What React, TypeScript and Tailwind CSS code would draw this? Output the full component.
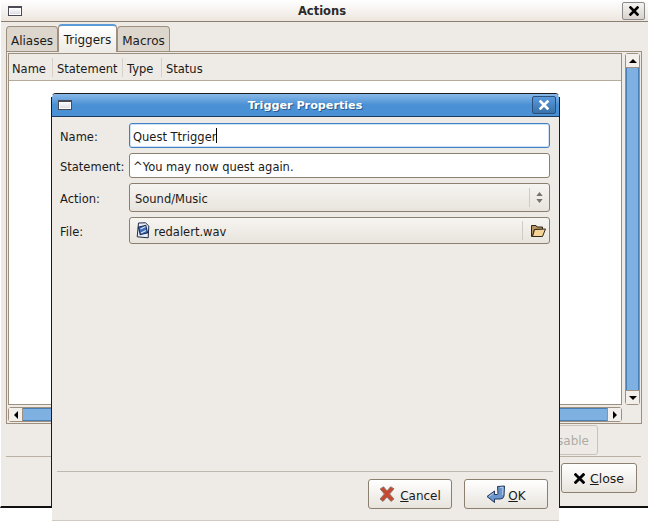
const ui = { fontFamily: '"DejaVu Sans", sans-serif' };

function WindowGlyph() {
  return (
    <div className="h-[10px] w-[14px] border border-[#4a4a55] border-t-2 bg-gradient-to-b from-white to-[#d8d8e4] shadow-[inset_0_0_0_1px_#fff]" />
  );
}

function CloseGlyph({ color = "#000", size = 10 }: { color?: string; size?: number }) {
  return (
    <svg width={size} height={size} viewBox="0 0 10 10">
      <path d="M1.5 1.5 L8.5 8.5 M8.5 1.5 L1.5 8.5" stroke={color} strokeWidth="2.6" strokeLinecap="square" />
    </svg>
  );
}

function Arrow({ dir }: { dir: "up" | "down" | "left" | "right" }) {
  const points = { up: "0,6 4,2 8,6", down: "0,2 4,6 8,2", left: "6,0 2,4 6,8", right: "2,0 6,4 2,8" }[dir];
  return (
    <svg width="8" height="8" viewBox="0 0 8 8">
      <polygon points={points} fill="#000" />
    </svg>
  );
}

function Tab({ label, width, active }: { label: string; width: number; active?: boolean }) {
  return active ? (
    <div className="z-10 flex h-[28px] items-center justify-center rounded-t-[4px] border border-b-0 border-[#9d9080] border-t-2 border-t-[#5b9bd8] bg-gradient-to-b from-white to-[#eeebe6] text-[12px] text-[#1a1a1a]" style={{ width }}>
      <span className="mt-[1px]">{label}</span>
    </div>
  ) : (
    <div className="mt-[2px] flex h-[25px] items-center justify-center rounded-t-[4px] border border-b-0 border-[#9d9080] bg-[#dcd6cd] text-[12px] text-[#1a1a1a]" style={{ width }}>
      <span className="mt-[3px]">{label}</span>
    </div>
  );
}

function HeaderCell({ label, width, pad, last }: { label: string; width: number; pad: number; last?: boolean }) {
  return (
    <div className="relative flex h-full items-center" style={{ width, paddingLeft: pad }}>
      <span className="mt-[5px]">{label}</span>
      {!last && <div className="absolute right-0 top-[4px] h-[19px] w-px bg-[#d5d0c8]" />}
    </div>
  );
}

function FormLabel({ text }: { text: string }) {
  return <div className="mt-[4px] w-[69px] shrink-0 text-[#1a1a1a]">{text}</div>;
}

function FolderIcon() {
  return (
    <svg width="16" height="14" viewBox="0 0 16 14">
      <path d="M1.5 1.5 L6 1.5 L7 3 L12.5 3 L12.5 5.5 L4.5 5.5 L2.5 12.5 L1.5 12.5 Z" fill="#b8955c" stroke="#2f2719" strokeWidth="1" strokeLinejoin="round" />
      <path d="M4.5 5.5 L15.5 5 L12.5 12.5 L2.5 12.5 Z" fill="#f4d396" stroke="#2f2719" strokeWidth="1" strokeLinejoin="round" />
    </svg>
  );
}

function AudioIcon() {
  return (
    <svg width="14" height="17" viewBox="0 0 14 17">
      <path d="M2.5 1 L9.5 0.8 L12.8 4 L12.2 15.8 L1.2 14.8 Z" fill="#e8ecf4" stroke="#1f2a48" strokeWidth="1" strokeLinejoin="round" />
      <rect x="3.2" y="4.2" width="7.6" height="7.6" fill="#3c6cb8" stroke="#16264f" strokeWidth="1" transform="rotate(-14 7 8)" />
      <path d="M4.5 7 L9.5 4.5 M5 11 L10 8.5" stroke="#dbe6f6" strokeWidth="1.1" />
    </svg>
  );
}

function OkIcon() {
  return (
    <svg width="20" height="19" viewBox="0 0 20 19">
      <path d="M11.5 1.5 L18.5 1 L18 11 Q17.5 14 14 14 L8.5 14 L8.5 17.5 L1 11.5 L8.5 6 L8.5 9.5 L11 9.5 Q12 9.5 12 8.5 Z" fill="#6a96cd" stroke="#24395c" strokeWidth="1" strokeLinejoin="round" />
      <path d="M14 2.5 L17 2.3 L16.6 10" stroke="#bcd2ec" strokeWidth="1" fill="none" />
      <path d="M3 11.5 L7.5 8.2" stroke="#bcd2ec" strokeWidth="1" fill="none" />
    </svg>
  );
}

function CancelIcon() {
  return (
    <svg width="16" height="16" viewBox="0 0 16 16">
      <path d="M1.2 3 L4.6 0.8 L8 5 L11.6 0.8 L15 2.8 L10.6 8 L15 13 L12 15.4 L8 11 L4 15.4 L1 13 L5.4 8 Z" fill="#c6482e" stroke="#8a7a72" strokeWidth="1" strokeLinejoin="round" />
    </svg>
  );
}

function DialogButton({ icon, first, rest, gap }: { icon: React.ReactNode; first: string; rest: string; gap: number }) {
  return (
    <div className="flex h-[30px] w-[84px] items-center justify-center rounded-[3px] border border-[#8b8070] bg-gradient-to-b from-white to-[#e8e4dd] text-[12px] text-[#1a1a1a]" style={{ gap }}>
      {icon}
      <span className="mt-[3px]">
        <span className="underline">{first}</span>
        {rest}
      </span>
    </div>
  );
}

export default function App() {
  return (
    <div className="relative h-[521px] w-[648px] overflow-hidden bg-white text-[11.5px] leading-none" style={ui}>
      {/* Actions window */}
      <div className="flex h-[508px] flex-col border-b-2 border-l border-[#111] border-l-white bg-[#eeebe6]">
        <div className="flex h-[22px] shrink-0 items-center border-b border-[#8a7f70] bg-gradient-to-b from-white to-[#ede6df] pl-[7px] pr-[3px]">
          <WindowGlyph />
          <div className="mt-[2px] flex-1 text-center font-bold text-[#2a2a2a]">Actions</div>
          <div className="flex h-[18px] w-[23px] items-center justify-center rounded-[2px] border border-[#8a8a8a] bg-gradient-to-b from-[#f5f3f0] to-[#d8d3cc]">
            <CloseGlyph />
          </div>
        </div>

        <div className="flex flex-1 flex-col px-[5px] pt-[2px]">
          <div className="-mb-px flex h-[28px] shrink-0 items-start">
            <Tab label="Aliases" width={52} />
            <Tab label="Triggers" width={59} active />
            <Tab label="Macros" width={53} />
          </div>

          <div className="flex h-[373px] w-[636px] shrink-0 flex-col border border-[#9d9080] p-px">
            <div className="flex min-h-0 flex-1">
              <div className="flex flex-1 flex-col border border-[#9d9080] bg-white">
                <div className="flex h-[27px] shrink-0 items-center border-b border-[#b5ab9b] bg-[#eeebe6] text-[#1a1a1a]">
                  <HeaderCell label="Name" width={44} pad={3} />
                  <HeaderCell label="Statement" width={70} pad={4} />
                  <HeaderCell label="Type" width={39} pad={4} />
                  <HeaderCell label="Status" width={60} pad={4} last />
                </div>
              </div>
              <div className="ml-[3px] flex w-[15px] shrink-0 flex-col rounded-[3px] border border-[#9d9080]">
                <div className="flex h-[14px] items-center justify-center border-b border-[#9d9080] bg-[#f3f0ec]">
                  <Arrow dir="up" />
                </div>
                <div className="flex-1 border-x border-[#4a7fb5] bg-[#7eb0e2]" />
                <div className="flex h-[14px] items-center justify-center border-t border-[#9d9080] bg-[#f3f0ec]">
                  <Arrow dir="down" />
                </div>
              </div>
            </div>
            <div className="mt-[2px] flex h-[15px] w-[614px] shrink-0 rounded-[3px] border border-[#9d9080]">
              <div className="flex w-[14px] items-center justify-center border-r border-[#9d9080] bg-[#f3f0ec]">
                <Arrow dir="left" />
              </div>
              <div className="flex-1 border-y border-[#4a7fb5] bg-[#7eb0e2]" />
              <div className="flex w-[14px] items-center justify-center border-l border-[#9d9080] bg-[#f3f0ec]">
                <Arrow dir="right" />
              </div>
            </div>
          </div>

          <div className="flex h-[31px] shrink-0 justify-end pr-[45px] pt-px">
            <div className="flex h-[30px] w-[80px] items-center justify-end rounded-[3px] border border-[#c9c3b9] pr-[8px] text-[12px] text-[#b0aca5]">
              <span className="mt-[2px]">Disable</span>
            </div>
          </div>
          <div className="mr-[2px] mt-px h-px shrink-0 bg-[#b9b1a4]" />
          <div className="flex justify-end pr-[6px] pt-[6px]">
            <div className="flex h-[30px] w-[76px] items-center justify-center gap-[5px] rounded-[3px] border border-[#8b8070] bg-gradient-to-b from-white to-[#e8e4dd] text-[12.5px] text-[#1a1a1a]">
              <CloseGlyph size={11} />
              <span className="mt-[3px]">
                <span className="underline">C</span>lose
              </span>
            </div>
          </div>
        </div>
      </div>

      {/* Trigger Properties dialog */}
      <div className="absolute left-[51px] top-[93px] flex h-[428px] w-[509px] flex-col rounded-t-[5px] border-x border-t border-transparent border-t-[#1a1a1a] bg-[#eeebe6] bg-clip-padding">
        <div className="absolute -left-px top-[3px] h-[410px] w-px bg-[#1a1a1a]" />
        <div className="absolute -right-px top-[3px] h-[410px] w-px bg-[#1a1a1a]" />
        <div className="flex h-[23px] shrink-0 items-center rounded-t-[4px] border-b border-[#1f3a60] bg-gradient-to-b from-[#88b8e8] via-[#4a90d4] to-[#4a90d4] pl-[6px] pr-[3px]">
          <WindowGlyph />
          <div className="mt-[2px] flex-1 pl-[6px] text-center text-[11.2px] font-bold text-white [text-shadow:1px_1px_0_#2a5a90]">Trigger Properties</div>
          <div className="flex h-[18px] w-[24px] items-center justify-center rounded-[2px] border border-[#2a4f7c] bg-gradient-to-b from-[#5a9ade] to-[#3a72a8]">
            <CloseGlyph color="#fff" />
          </div>
        </div>

        <div className="flex flex-1 flex-col pl-[5px] pr-[5px] pt-[6px] text-[#1a1a1a]">
          <div className="flex h-[25px] items-center pl-[3px] pr-[4px]">
            <FormLabel text="Name:" />
            <div className="flex h-[25px] flex-1 items-center rounded-[3px] border border-[#3f7fc4] bg-white pl-[3px] shadow-[inset_0_0_0_1px_#cfe2f6]">
              <span className="mt-[4px]">Quest Ttrigger</span>
              <span className="h-[15px] w-px bg-black" />
            </div>
          </div>
          <div className="mt-[5px] flex h-[25px] items-center pl-[3px] pr-[4px]">
            <FormLabel text="Statement:" />
            <div className="flex h-[25px] flex-1 items-center rounded-[3px] border border-[#8b8070] bg-white pl-[3px]">
              <span className="mt-[4px]">^You may now quest again.</span>
            </div>
          </div>
          <div className="mt-[5px] flex h-[29px] items-center pl-[3px] pr-[4px]">
            <FormLabel text="Action:" />
            <div className="flex h-[29px] flex-1 items-center rounded-[3px] border border-[#8b8070] bg-gradient-to-b from-[#f7f5f2] to-[#e8e4dd] pl-[5px]">
              <span className="mt-[4px] flex-1">Sound/Music</span>
              <div className="flex h-[19px] w-[20px] flex-col items-center justify-center gap-[3px] border-l border-[#cfcac2]">
                <svg width="7" height="4" viewBox="0 0 8 5"><polygon points="0,5 4,0 8,5" fill="#77736c" /></svg>
                <svg width="7" height="4" viewBox="0 0 8 5"><polygon points="0,0 4,5 8,0" fill="#77736c" /></svg>
              </div>
            </div>
          </div>
          <div className="mt-[5px] flex h-[27px] items-center pl-[3px] pr-[4px]">
            <FormLabel text="File:" />
            <div className="flex h-[27px] flex-1 items-center rounded-[3px] border border-[#8b8070] bg-gradient-to-b from-[#f7f5f2] to-[#e8e4dd] pl-[6px]">
              <AudioIcon />
              <span className="ml-[4px] mt-[4px] flex-1">redalert.wav</span>
              <div className="flex h-[19px] w-[27px] items-center justify-center border-l border-[#cfcac2] pl-[3px]">
                <FolderIcon />
              </div>
            </div>
          </div>

          <div className="flex-1" />
          <div className="mr-px h-px bg-[#bdb8b0]" />
          <div className="flex h-[48px] justify-end gap-[12px] pr-[6px] pt-[7px]">
            <DialogButton icon={<CancelIcon />} first="C" rest="ancel" gap={5} />
            <DialogButton icon={<OkIcon />} first="O" rest="K" gap={2} />
          </div>
          <div className="-mx-[5px] h-px bg-[#cfcac3]" />
        </div>
      </div>
    </div>
  );
}
